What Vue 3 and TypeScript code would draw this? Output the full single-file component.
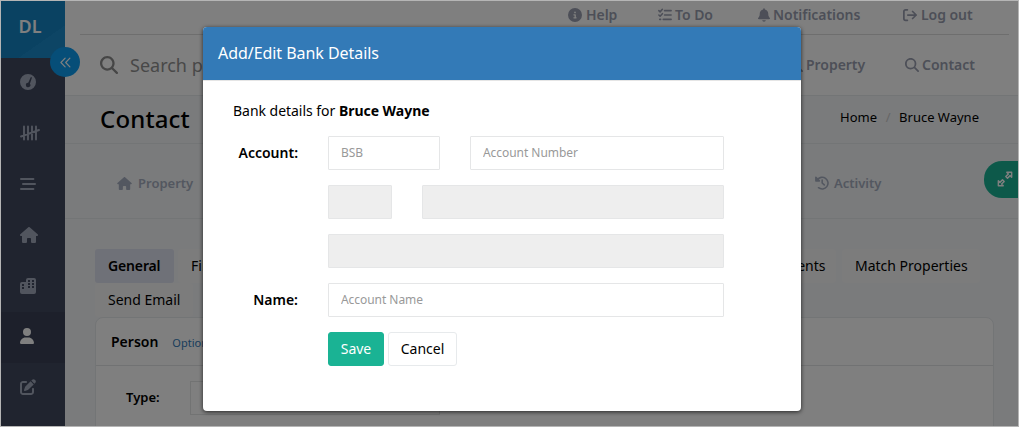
<script setup lang="ts">
import { ref } from 'vue'

interface Icon { box: string; path?: string; stroke?: string; width?: number }

const icons: Record<string, Icon> = {
  gauge: { box: '0 0 16 16', path: 'M8 0a8 8 0 1 0 0 16A8 8 0 0 0 8 0ZM10.9 3.1 12 3.6 9.9 9.7A2.2 2.2 0 1 1 8.2 8.8Z' },
  tally: { box: '0 0 20 16', stroke: 'M4 1.5v13M8 1.5v13M12 1.5v13M16 1.5v13M1 11.5 19 5', width: 1.9 },
  bars: { box: '0 0 16 16', stroke: 'M1 3h12.4M3 8h12M1 13h12.4', width: 2 },
  house: { box: '0 0 576 512', path: 'M575.8 255.5c0 18-15 32.1-32 32.1h-32l.7 160.2c0 2.7-.2 5.4-.5 8.1V472c0 22.1-17.9 40-40 40H392c-22.1 0-40-17.9-40-40V384c0-17.7-14.3-32-32-32H256c-17.7 0-32 14.3-32 32v88c0 22.1-17.9 40-40 40H104c-22.1 0-40-17.9-40-40V287.6H32c-18 0-32-14-32-32.1c0-9 3-17 10-24L266.4 8c7-7 15-8 22-8s15 2 21 7L564.8 231.5c8 7 12 15 11 24z' },
  city: { box: '0 0 16 16', path: 'M8 0h6a2 2 0 0 1 2 2v12a2 2 0 0 1-2 2H2a2 2 0 0 1-2-2V6a2 2 0 0 1 2-2h4V2a2 2 0 0 1 2-2ZM8 2v2h2V2ZM12 2v2h2V2ZM8 5v2h2V5ZM12 5v2h2V5ZM8 8v2h2V8ZM12 8v2h2V8ZM2 6v2h2V6ZM2 9v2h2V9Z' },
  user: { box: '0 0 448 512', path: 'M224 256A128 128 0 1 0 224 0a128 128 0 1 0 0 256zm-45.7 48C79.8 304 0 383.8 0 482.3C0 498.7 13.3 512 29.7 512H418.3c16.4 0 29.7-13.3 29.7-29.7C448 383.8 368.2 304 269.7 304H178.3z' },
  edit: { box: '0 0 512 512', path: 'M471.6 21.7c-21.9-21.9-57.3-21.9-79.2 0L362.3 51.7l97.9 97.9 30.1-30.1c21.9-21.9 21.9-57.3 0-79.2L471.6 21.7zm-299.2 220c-6.1 6.1-10.8 13.6-13.5 21.9l-29.6 88.8c-2.9 8.6-.6 18.1 5.8 24.6s15.9 8.7 24.6 5.8l88.8-29.6c8.2-2.7 15.7-7.4 21.9-13.5L437.7 172.3 339.7 74.3 172.4 241.7zM96 64C43 64 0 107 0 160V416c0 53 43 96 96 96H352c53 0 96-43 96-96V320c0-17.7-14.3-32-32-32s-32 14.3-32 32v96c0 17.7-14.3 32-32 32H96c-17.7 0-32-14.3-32-32V160c0-17.7 14.3-32 32-32h96c17.7 0 32-14.3 32-32s-14.3-32-32-32H96z' },
  search: { box: '0 0 512 512', path: 'M416 208c0 45.9-14.9 88.3-40 122.7L502.6 457.4c12.5 12.5 12.5 32.8 0 45.3s-32.8 12.5-45.3 0L330.7 376c-34.4 25.2-76.8 40-122.7 40C93.1 416 0 322.9 0 208S93.1 0 208 0S416 93.1 416 208zM208 352a144 144 0 1 0 0-288 144 144 0 1 0 0 288z' },
  info: { box: '0 0 512 512', path: 'M256 512A256 256 0 1 0 256 0a256 256 0 1 0 0 512zM216 336h24V272H216c-13.3 0-24-10.7-24-24s10.7-24 24-24h48c13.3 0 24 10.7 24 24v88h8c13.3 0 24 10.7 24 24s-10.7 24-24 24H216c-13.3 0-24-10.7-24-24s10.7-24 24-24zm40-208a32 32 0 1 1 0 64 32 32 0 1 1 0-64z' },
  tasks: { box: '0 0 16 16', stroke: 'M1 3l1.4 1.4L5 1.5M1 8l1.4 1.4L5 6.5M7.5 3H15M7.5 8H15M6 13h9M2 13h1', width: 1.8 },
  bell: { box: '0 0 448 512', path: 'M224 0c-17.7 0-32 14.3-32 32V51.2C119 66 64 130.6 64 208v18.8c0 47-17.3 92.4-48.5 127.6l-7.4 8.3c-8.4 9.4-10.4 22.9-5.3 34.4S19.4 416 32 416H416c12.6 0 24-7.4 29.2-18.9s3.1-25-5.3-34.4l-7.4-8.3C401.3 319.2 384 273.9 384 226.8V208c0-77.4-55-142-128-156.8V32c0-17.7-14.3-32-32-32zm45.3 493.3c12-12 18.7-28.3 18.7-45.3H160c0 17 6.7 33.3 18.7 45.3s28.3 18.7 45.3 18.7s33.3-6.7 45.3-18.7z' },
  logout: { box: '0 0 16 16', stroke: 'M5 2H3a2 2 0 0 0-2 2v8a2 2 0 0 0 2 2h2M5.5 8H15M11 4l4 4-4 4', width: 2 },
  history: { box: '0 0 16 16', stroke: 'M2.6 4.4A6.7 6.7 0 1 1 4 13.4M8.2 4.6V8l2.4 2.2M1 1.6v4h4L1 1.6', width: 1.8 },
  angles: { box: '0 0 12 12', stroke: 'M5.6 1.2 1 6l4.6 4.8M10.8 1.2 6.2 6l4.6 4.8', width: 1.3 },
  expand: { box: '0 0 18 18', stroke: 'M11 1.5h5.5V7l-1.8-1.8-2.9 2.9-1.9-1.9 2.9-2.9ZM7 16.5H1.5V11l1.8 1.8 2.9-2.9 1.9 1.9-2.9 2.9Z', width: 1.6 },
}

const menu = ['gauge', 'tally', 'bars', 'house', 'city', 'user', 'edit']
const topLinks = [
  { icon: 'info', label: 'Help', cls: 'help' },
  { icon: 'tasks', label: 'To Do', cls: 'todo' },
  { icon: 'bell', label: 'Notifications', cls: 'notif' },
  { icon: 'logout', label: 'Log out', cls: 'logout' },
]
const bsb = ref('')
const accountNumber = ref('')
const accountName = ref('')

const Glyph = (props: { name: string }) => {
  const i = icons[props.name]
  return h('svg', { viewBox: i.box, 'aria-hidden': 'true' }, [
    i.path
      ? h('path', { d: i.path, fill: 'currentColor', 'fill-rule': 'evenodd' })
      : h('path', { d: i.stroke, fill: 'none', stroke: 'currentColor', 'stroke-width': i.width, 'stroke-linecap': 'round', 'stroke-linejoin': 'round' }),
  ])
}
Glyph.props = ['name']
</script>

<script lang="ts">
import { h } from 'vue'
</script>

<template>
  <div class="screen">
    <div class="app">
      <aside class="sidebar">
        <div class="logo">DL</div>
        <a v-for="m in menu" :key="m" class="menu-item" :class="[m, { active: m === 'user' }]"><Glyph :name="m" /></a>
      </aside>
      <div class="collapse"><Glyph name="angles" /></div>

      <main class="page">
        <header class="header">
          <nav class="top-links">
            <a v-for="l in topLinks" :key="l.label" :class="l.cls"><Glyph :name="l.icon" /><span>{{ l.label }}</span></a>
          </nav>
          <div class="search-row">
            <Glyph name="search" /><span class="search-text">Search p</span>
            <a class="find property"><Glyph name="search" /><span>Property</span></a>
            <a class="find contact"><Glyph name="search" /><span>Contact</span></a>
          </div>
        </header>

        <section class="heading">
          <h1>Contact</h1>
          <div class="crumbs"><span class="home">Home</span><i>/</i><span class="person-name">Bruce Wayne</span></div>
        </section>

        <section class="steps">
          <a class="step-property"><Glyph name="house" /><span>Property</span></a>
          <a class="step-activity"><Glyph name="history" /><span>Activity</span></a>
        </section>

        <section class="content">
          <div class="tabs">
            <a class="tab current general"><span>General</span></a>
            <a class="tab files"><span>Files</span></a>
            <a class="tab documents"><span>Documents</span></a>
            <a class="tab match"><span>Match Properties</span></a>
          </div>
          <div class="tabs"><a class="tab send"><span>Send Email</span></a></div>
          <div class="card">
            <div class="card-head"><b>Person</b><small>Options</small></div>
            <div class="card-row"><label>Type:</label><div class="select"></div></div>
          </div>
        </section>
      </main>
      <div class="expander"><Glyph name="expand" /></div>
    </div>

    <div class="backdrop"></div>
    <div class="modal" role="dialog">
      <div class="modal-head"><span class="modal-title">Add/Edit Bank Details</span></div>
      <div class="modal-body">
        <p><span>Bank details for </span><b>Bruce Wayne</b></p>
        <div class="row"><label>Account:</label><input v-model="bsb" class="bsb" placeholder="BSB" /><input v-model="accountNumber" class="grow" placeholder="Account Number" /></div>
        <div class="row"><label></label><input class="code" disabled /><input class="grow" disabled /></div>
        <div class="row"><label></label><input class="grow" disabled /></div>
        <div class="row"><label>Name:</label><input v-model="accountName" class="grow" placeholder="Account Name" /></div>
        <div class="actions"><button class="save">Save</button><button class="cancel">Cancel</button></div>
      </div>
    </div>
  </div>
</template>

<style>
body { margin: 0; overflow: hidden; }
</style>

<style scoped>
* { box-sizing: border-box; }
.screen {
  position: relative; width: 1019px; height: 427px; overflow: hidden;
  border: 1px solid #b5b5b5; background: #f4f6f9; color: #000;
  font: 14px/20px "Noto Sans", "Open Sans", sans-serif;
}
.app { display: flex; width: 1017px; height: 425px; overflow: hidden; }
a, span { white-space: nowrap; }
svg { display: block; flex: none; }

.sidebar { width: 64px; flex: none; background: #40485e; }
.logo {
  height: 57px; padding: 14px 6px 0 0; color: #fff; text-align: center; font-size: 18px; line-height: 22px; font-weight: 600;
  background: linear-gradient(145deg, #1485c5 0 68%, #1a8acb 68%);
}
.menu-item { display: flex; align-items: center; height: 50.8px; padding: 0 0 2px 19px; color: #a3abbd; }
.menu-item svg { width: 16px; height: 16px; }
.menu-item.tally svg { width: 20px; }
.menu-item.house svg { width: 18px; }
.menu-item.user svg { width: 14px; }
.menu-item.active { background: #3a4156; color: #fff; }
.collapse {
  position: absolute; left: 49px; top: 46px; width: 30px; height: 30px; border-radius: 50%;
  display: flex; align-items: center; justify-content: center; background: #0c9cf0; color: #fff;
}
.collapse svg { width: 11px; height: 11px; }

.page { flex: 1; min-width: 0; }
.header { height: 95px; background: #fff; border-bottom: 1px solid #e7eaec; color: #9a9fb0; font-weight: 600; }
.top-links { display: flex; align-items: center; height: 34px; margin: 0 9px 0 15px; padding: 0 0 5px 488px; border-bottom: 1px solid #dcdcdc; }
.top-links a { display: flex; align-items: center; flex: none; }
.top-links svg { width: 14px; height: 14px; margin-right: 4px; }
.help { width: 90px; }
.todo { width: 100px; }
.notif { width: 145px; }
.top-links .todo svg { margin-right: 3px; }
.top-links .notif svg { width: 12px; margin-right: 3px; }
.top-links span, .find span { letter-spacing: -.04px; }
.search-row { display: flex; align-items: center; height: 60px; padding-left: 35px; }
.search-row > svg { width: 18px; height: 18px; color: #8c8c8c; }
.search-text { width: 100px; margin-left: 12px; font-size: 18px; font-weight: 400; color: #919191; }
.find { display: flex; align-items: center; }
.find svg { width: 14px; height: 14px; margin-right: 3px; }
.property { width: 116px; margin-left: 559px; }

.heading { display: flex; justify-content: space-between; align-items: center; height: 48px; padding: 0 39px 2px 35px; border-bottom: 1px solid #e7eaec; }
h1 { margin: 0; font-size: 24px; line-height: 30px; font-weight: 500; letter-spacing: .15px; }
.crumbs { display: flex; font-size: 13px; padding-bottom: 4px; }
.crumbs i { width: 22px; text-align: center; font-style: normal; color: #ccc; }

.steps { display: flex; align-items: center; height: 75px; padding: 4px 0 0 52px; border-bottom: 1px solid #e7eaec; color: #a7afc0; font-size: 13px; font-weight: 600; }
.steps a { display: flex; align-items: center; }
.steps svg { height: 13px; width: 15px; margin-right: 6px; }
.step-property { width: 698px; }
.steps .step-activity svg { width: 14px; height: 14px; margin-right: 5px; }

.content { padding: 30px 24px 0 30px; }
.tabs { display: flex; height: 34px; }
.tab { display: block; height: 34px; padding: 7px 0 0 13px; background: #f8f8f8; border-radius: 3px; }
.tab.current { background: #dfe2f0; font-weight: 600; letter-spacing: -.15px; }
.general { width: 79px; margin-right: 4px; }
.files { width: 60px; }
.documents { width: 99px; padding-right: 11px; margin-left: 499px; text-align: right; }
.match { width: 138px; margin-left: 6px; }
.send { width: 98px; }
.card { height: 130px; border: 1px solid #e7eaec; border-radius: 8px 8px 0 0; background: #fff; }
.card-head { display: flex; align-items: center; height: 48px; padding-left: 15px; border-bottom: 1px solid #e2e4e6; }
.card-head b { font-weight: 600; }
.card-head small { margin: 2px 0 0 14px; color: #337ab7; font-size: 11px; }
.card-row { display: flex; align-items: center; padding: 15px 0 0 30px; font-size: 13px; font-weight: 600; }
.card-row label { width: 64px; padding-bottom: 2px; }
.select { width: 250px; height: 34px; border: 1px solid #e5e6e7; }
.expander {
  position: absolute; right: 0; top: 160px; width: 34px; height: 37px; border-radius: 18px 0 0 18px;
  background: #1ab394; color: #fff; display: flex; align-items: center; padding: 0 0 2px 13px;
}
.expander svg { width: 16px; height: 16px; }

.backdrop { position: absolute; inset: 0; background: rgba(0, 0, 0, .5); }
.modal { position: absolute; left: 202px; top: 26px; width: 598px; height: 384px; border-radius: 4px; overflow: hidden; background: #fff; box-shadow: 0 1px 4px rgba(0, 0, 0, .7); }
.modal-head { height: 54px; padding: 16px 15px 0; background: #337ab7; color: #fff; font-size: 16px; letter-spacing: -.05px; border-bottom: 1px solid #e5e5e5; background-clip: padding-box; }
.modal-body { padding: 20px 77px 0 30px; }
p { margin: 0 0 15px; white-space: pre; letter-spacing: -.03px; }
p b { font-weight: 700; }
.row { display: flex; gap: 30px; margin-bottom: 15px; height: 34px; }
.row label { width: 65px; line-height: 34px; text-align: right; font-weight: 600; }
input { min-width: 0; height: 34px; margin: 0; padding: 5px 12px 7px; border: 1px solid #e5e6e7; border-radius: 1px; background: #fff; font: 12px "Noto Sans", "Open Sans", sans-serif; letter-spacing: -.05px; }
input::placeholder { color: #999; opacity: 1; }
input:disabled { background: #eee; }
.bsb { width: 112px; }
.code { width: 64px; }
.grow { flex: 1; }
.actions { display: flex; gap: 4px; padding-left: 95px; }
button { height: 34px; padding: 0; border-radius: 3px; font: 14px/20px "Noto Sans", "Open Sans", sans-serif; }
.save { width: 56px; border: 1px solid #1ab394; background: #1ab394; color: #fff; }
.cancel { width: 69px; border: 1px solid #e7eaec; background: #fff; color: #000; }
</style>
